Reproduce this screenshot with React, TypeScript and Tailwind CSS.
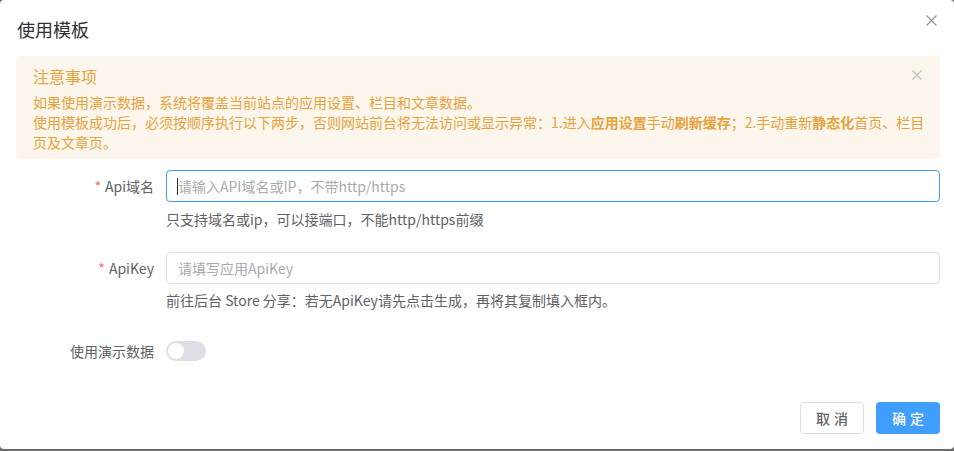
import React from "react";

const font = { fontFamily: '"Noto Sans CJK SC", "Liberation Sans", sans-serif' };

function X({ color, size }: { color: string; size: number }) {
  return (
    <svg width={size} height={size} viewBox="0 0 10 10" fill="none">
      <path d="M0.5 0.5L9.5 9.5M9.5 0.5L0.5 9.5" stroke={color} strokeWidth="1.1" />
    </svg>
  );
}

export default function App() {
  return (
    <div className="w-[954px] h-[451px] bg-[#6b6b6b] overflow-hidden" style={font}>
      <div className="relative h-[449px] bg-white rounded-[4px] pl-4 pr-[14px] flex flex-col">
        <div className="pt-[17px] h-[56px] flex items-start justify-between">
          <div className="text-[18px] leading-[24px] text-[#303133] pl-[1px]">使用模板</div>
          <div className="mt-[-2px] mr-[3px] pt-0">
            <X color="#909399" size={11} />
          </div>
        </div>

        <div className="relative bg-[#fdf6ec] rounded-[4px] pl-[17px] pr-[12px] pt-2 pb-[7px] text-[#e6a23c]">
          <div className="text-[16px] leading-[24px]">注意事项</div>
          <div className="mt-1 text-[14px] leading-[20px]">
            <div>如果使用演示数据，系统将覆盖当前站点的应用设置、栏目和文章数据。</div>
            <div>
              使用模板成功后，必须按顺序执行以下两步，否则网站前台将无法访问或显示异常：1.进入
              <b>应用设置</b>手动<b>刷新缓存</b>；2.手动重新<b>静态化</b>首页、栏目页及文章页。
            </div>
          </div>
          <div className="absolute right-[18px] top-[14px]">
            <X color="#b9bcc3" size={10} />
          </div>
        </div>

        <div className="mt-[11px] flex">
          <div className="w-[150px] pr-3 h-8 flex items-center justify-end text-[14px] text-[#606266]">
            <span className="text-[#f56c6c] mr-1">*</span>Api域名
          </div>
          <div className="flex-1">
            <div className="relative h-8 rounded-[4px] border border-[#409eff] flex items-center pl-[11px] text-[14px] text-[#a8abb2]">
              请输入API域名或IP，不带http/https
              <span className="absolute left-[10px] top-[7px] w-px h-[17px] bg-[#303133]" />
            </div>
            <div className="mt-[7px] text-[14px] leading-[20px] text-[#606266]">
              只支持域名或ip，可以接端口，不能http/https前缀
            </div>
          </div>
        </div>

        <div className="mt-[23px] flex">
          <div className="w-[150px] pr-3 h-8 flex items-center justify-end text-[14px] text-[#606266]">
            <span className="text-[#f56c6c] mr-1">*</span>ApiKey
          </div>
          <div className="flex-1">
            <div className="h-8 rounded-[4px] border border-[#dcdfe6] flex items-center pl-[11px] text-[14px] text-[#a8abb2]">
              请填写应用ApiKey
            </div>
            <div className="mt-[6px] text-[14px] leading-[20px] text-[#606266]">
              前往后台 Store 分享：若无ApiKey请先点击生成，再将其复制填入框内。
            </div>
          </div>
        </div>

        <div className="mt-[25px] flex">
          <div className="w-[150px] pr-3 h-8 flex items-center justify-end text-[14px] text-[#606266]">
            使用演示数据
          </div>
          <div className="h-8 flex items-center">
            <div className="w-10 h-5 rounded-full bg-[#dcdfe6] relative">
              <div className="absolute left-[2px] top-[2px] w-4 h-4 rounded-full bg-white" />
            </div>
          </div>
        </div>

        <div className="mt-[35px] flex justify-end gap-3">
          <button className="w-16 h-8 rounded-[4px] border border-[#dcdfe6] bg-white text-[14px] font-medium text-[#606266] tracking-[4px] pl-[4px]">
            取消
          </button>
          <button className="w-16 h-8 rounded-[4px] bg-[#409eff] text-[14px] font-medium text-white tracking-[4px] pl-[4px]">
            确定
          </button>
        </div>
      </div>
    </div>
  );
}
